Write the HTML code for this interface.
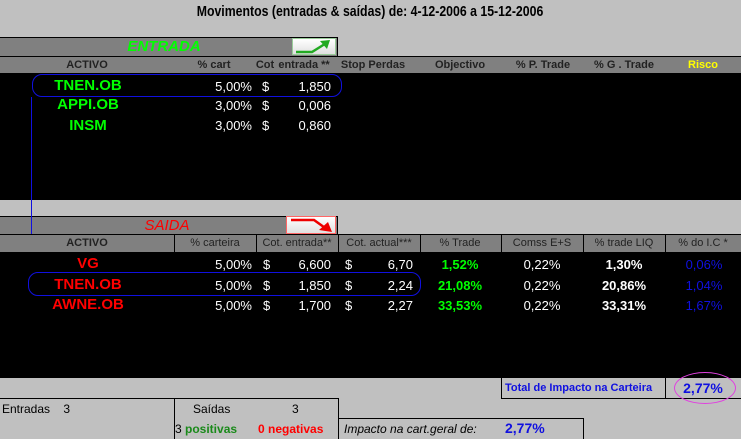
<!DOCTYPE html>
<html><head><meta charset="utf-8"><style>
*{margin:0;padding:0;box-sizing:border-box}
body{width:741px;height:439px;background:#c0c0c0;position:relative;overflow:hidden;font-family:"Liberation Sans",Arial,sans-serif;}
.a{position:absolute;white-space:nowrap}
.b{font-weight:bold}
.h{font-size:11px;font-weight:bold;color:#222}
.w{color:#fff;font-size:13px}
.g{color:#00ff00;font-size:15px;font-weight:bold}
.r{color:#ff0000;font-size:15px;font-weight:bold}
.c{transform:translateX(-50%)}
.rt{transform:translateX(-100%)}
</style></head><body>
<div class="a" style="left:370px;top:3px;font-size:15px;font-weight:bold;color:#000;transform:translateX(-50%) scaleX(.82)">Movimentos (entradas &amp; saídas) de: 4-12-2006 a 15-12-2006</div>

<!-- ENTRADA bar -->
<div class="a" style="left:0;top:37px;width:338px;height:20px;background:#808080;border-top:1px solid #000;border-right:1px solid #000"></div>
<div class="a c" style="left:164px;top:38px;color:#00ff00;font-size:15px;font-weight:bold;font-style:italic">ENTRADA</div>
<div class="a" style="left:292px;top:38px;width:44px;height:17px;background:linear-gradient(#fff,#e0e0e0);border:1px solid #9c9"></div>
<svg class="a" style="left:292px;top:38px" width="44" height="17"><path d="M4 14 H20 L36 4" stroke="#2a2" stroke-width="2.5" fill="none"/><path d="M28 3 L38 2 L35 11 Z" fill="#2a2"/></svg>
<div class="a" style="left:0;top:56px;width:741px;height:17px;background:#808080;border-top:1px solid #000"></div>
<div class="a h c" style="left:87px;top:59px">ACTIVO</div>
<div class="a h c" style="left:214px;top:59px">% cart</div>
<div class="a h c" style="left:265px;top:59px">Cot</div>
<div class="a h c" style="left:304px;top:59px">entrada **</div>
<div class="a h c" style="left:373px;top:59px">Stop Perdas</div>
<div class="a h c" style="left:460px;top:59px">Objectivo</div>
<div class="a h c" style="left:543px;top:59px">% P. Trade</div>
<div class="a h c" style="left:624px;top:59px">% G . Trade</div>
<div class="a h c" style="left:703px;top:59px;color:#ffff00">Risco</div>
<div class="a" style="left:0;top:73px;width:741px;height:127px;background:#000"></div>
<div class="a" style="left:32px;top:74px;width:310px;height:23px;border:1px solid #1010e0;border-radius:10px"></div>
<div class="a g c" style="left:88px;top:77px">TNEN.OB</div>
<div class="a g c" style="left:88px;top:96px">APPI.OB</div>
<div class="a g c" style="left:88px;top:117px">INSM</div>
<div class="a w rt" style="left:252px;top:79px">5,00%</div>
<div class="a w rt" style="left:252px;top:98px">3,00%</div>
<div class="a w rt" style="left:252px;top:118px">3,00%</div>
<div class="a w" style="left:262px;top:79px">$</div>
<div class="a w" style="left:262px;top:98px">$</div>
<div class="a w" style="left:262px;top:118px">$</div>
<div class="a w rt" style="left:331px;top:79px">1,850</div>
<div class="a w rt" style="left:331px;top:98px">0,006</div>
<div class="a w rt" style="left:331px;top:118px">0,860</div>
<div class="a" style="left:31px;top:97px;width:1px;height:155px;background:#1010e0"></div>

<!-- SAIDA -->
<div class="a" style="left:0;top:216px;width:338px;height:19px;background:#808080;border-top:1px solid #000;border-right:1px solid #000"></div>
<div class="a" style="left:31px;top:200px;width:1px;height:52px;background:#1010e0"></div>
<div class="a c" style="left:167px;top:217px;color:#ff0000;font-size:15px;font-style:italic">SAIDA</div>
<div class="a" style="left:286px;top:216px;width:50px;height:18px;background:linear-gradient(#fff,#e0e0e0);border:1px solid #f66"></div>
<svg class="a" style="left:286px;top:216px" width="50" height="18"><path d="M5 4 H28 L42 14" stroke="#e00" stroke-width="2.5" fill="none"/><path d="M33 14 L46 16 L42 6 Z" fill="#e00"/></svg>
<div class="a" style="left:0;top:234px;width:741px;height:18px;background:#808080;border-top:1px solid #000"></div>
<div class="a" style="left:174px;top:234px;width:1px;height:18px;background:#000"></div>
<div class="a" style="left:256px;top:234px;width:1px;height:18px;background:#000"></div>
<div class="a" style="left:338px;top:234px;width:1px;height:18px;background:#000"></div>
<div class="a" style="left:420px;top:234px;width:1px;height:18px;background:#000"></div>
<div class="a" style="left:501px;top:234px;width:1px;height:18px;background:#000"></div>
<div class="a" style="left:583px;top:234px;width:1px;height:18px;background:#000"></div>
<div class="a" style="left:665px;top:234px;width:1px;height:18px;background:#000"></div>
<div class="a h c" style="left:87px;top:237px">ACTIVO</div>
<div class="a h c" style="left:215px;top:237px;font-weight:normal">% carteira</div>
<div class="a h c" style="left:297px;top:237px;font-weight:normal">Cot. entrada**</div>
<div class="a h c" style="left:379px;top:237px;font-weight:normal">Cot. actual***</div>
<div class="a h c" style="left:460px;top:237px;font-weight:normal">% Trade</div>
<div class="a h c" style="left:542px;top:237px;font-weight:normal">Comss E+S</div>
<div class="a h c" style="left:624px;top:237px;font-weight:normal">% trade LIQ</div>
<div class="a h c" style="left:703px;top:237px;font-weight:normal">% do I.C *</div>
<div class="a" style="left:0;top:252px;width:741px;height:126px;background:#000"></div>
<div class="a" style="left:28px;top:272px;width:393px;height:24px;border:1px solid #1010e0;border-radius:10px"></div>
<div class="a r c" style="left:88px;top:255px">VG</div>
<div class="a r c" style="left:88px;top:276px">TNEN.OB</div>
<div class="a r c" style="left:88px;top:296px">AWNE.OB</div>
<div class="a w rt" style="left:252px;top:257px">5,00%</div>
<div class="a w rt" style="left:252px;top:278px">5,00%</div>
<div class="a w rt" style="left:252px;top:298px">5,00%</div>
<div class="a w" style="left:263px;top:257px">$</div><div class="a w" style="left:263px;top:278px">$</div><div class="a w" style="left:263px;top:298px">$</div>
<div class="a w rt" style="left:331px;top:257px">6,600</div>
<div class="a w rt" style="left:331px;top:278px">1,850</div>
<div class="a w rt" style="left:331px;top:298px">1,700</div>
<div class="a w" style="left:345px;top:257px">$</div><div class="a w" style="left:345px;top:278px">$</div><div class="a w" style="left:345px;top:298px">$</div>
<div class="a w rt" style="left:413px;top:257px">6,70</div>
<div class="a w rt" style="left:413px;top:278px">2,24</div>
<div class="a w rt" style="left:413px;top:298px">2,27</div>
<div class="a w b c" style="left:460px;top:257px;color:#00ff00">1,52%</div>
<div class="a w b c" style="left:460px;top:278px;color:#00ff00">21,08%</div>
<div class="a w b c" style="left:460px;top:298px;color:#00ff00">33,53%</div>
<div class="a w c" style="left:542px;top:257px">0,22%</div>
<div class="a w c" style="left:542px;top:278px">0,22%</div>
<div class="a w c" style="left:542px;top:298px">0,22%</div>
<div class="a w b c" style="left:624px;top:257px">1,30%</div>
<div class="a w b c" style="left:624px;top:278px">20,86%</div>
<div class="a w b c" style="left:624px;top:298px">33,31%</div>
<div class="a w c" style="left:704px;top:257px;color:#1010e0">0,06%</div>
<div class="a w c" style="left:704px;top:278px;color:#1010e0">1,04%</div>
<div class="a w c" style="left:704px;top:298px;color:#1010e0">1,67%</div>

<!-- bottom -->
<div class="a" style="left:501px;top:378px;width:240px;height:21px;border-left:1px solid #000;border-bottom:1px solid #000"></div>
<div class="a" style="left:665px;top:378px;width:1px;height:21px;background:#000"></div>
<div class="a b" style="left:505px;top:382px;font-size:11px;color:#1010e0">Total de Impacto na Carteira</div>
<div class="a b c" style="left:703px;top:380px;font-size:14px;color:#1010e0">2,77%</div>
<div class="a" style="left:674px;top:372px;width:62px;height:32px;border:1px solid #e040e0;border-radius:50%"></div>
<div class="a" style="left:0;top:398px;width:338px;height:1px;background:#000"></div>
<div class="a" style="left:174px;top:398px;width:165px;height:41px;border-left:1px solid #000;border-right:1px solid #000"></div>
<div class="a" style="left:338px;top:418px;width:246px;height:21px;border-top:1px solid #000;border-right:1px solid #000"></div>
<div class="a" style="left:2px;top:402px;font-size:12px;color:#000">Entradas&nbsp;&nbsp;&nbsp;&nbsp;3</div>
<div class="a" style="left:193px;top:402px;font-size:12px;color:#000">Saídas</div>
<div class="a" style="left:292px;top:402px;font-size:12px;color:#000">3</div>
<div class="a" style="left:175px;top:422px;font-size:12px;color:#000">3 <b style="color:#1a8a1a">positivas</b></div>
<div class="a b" style="left:258px;top:422px;font-size:12px;color:#ff0000">0 negativas</div>
<div class="a" style="left:344px;top:422px;font-size:12px;font-style:italic;color:#000">Impacto na cart.geral de:</div>
<div class="a b" style="left:505px;top:420px;font-size:14px;color:#1010e0">2,77%</div>
</body></html>
